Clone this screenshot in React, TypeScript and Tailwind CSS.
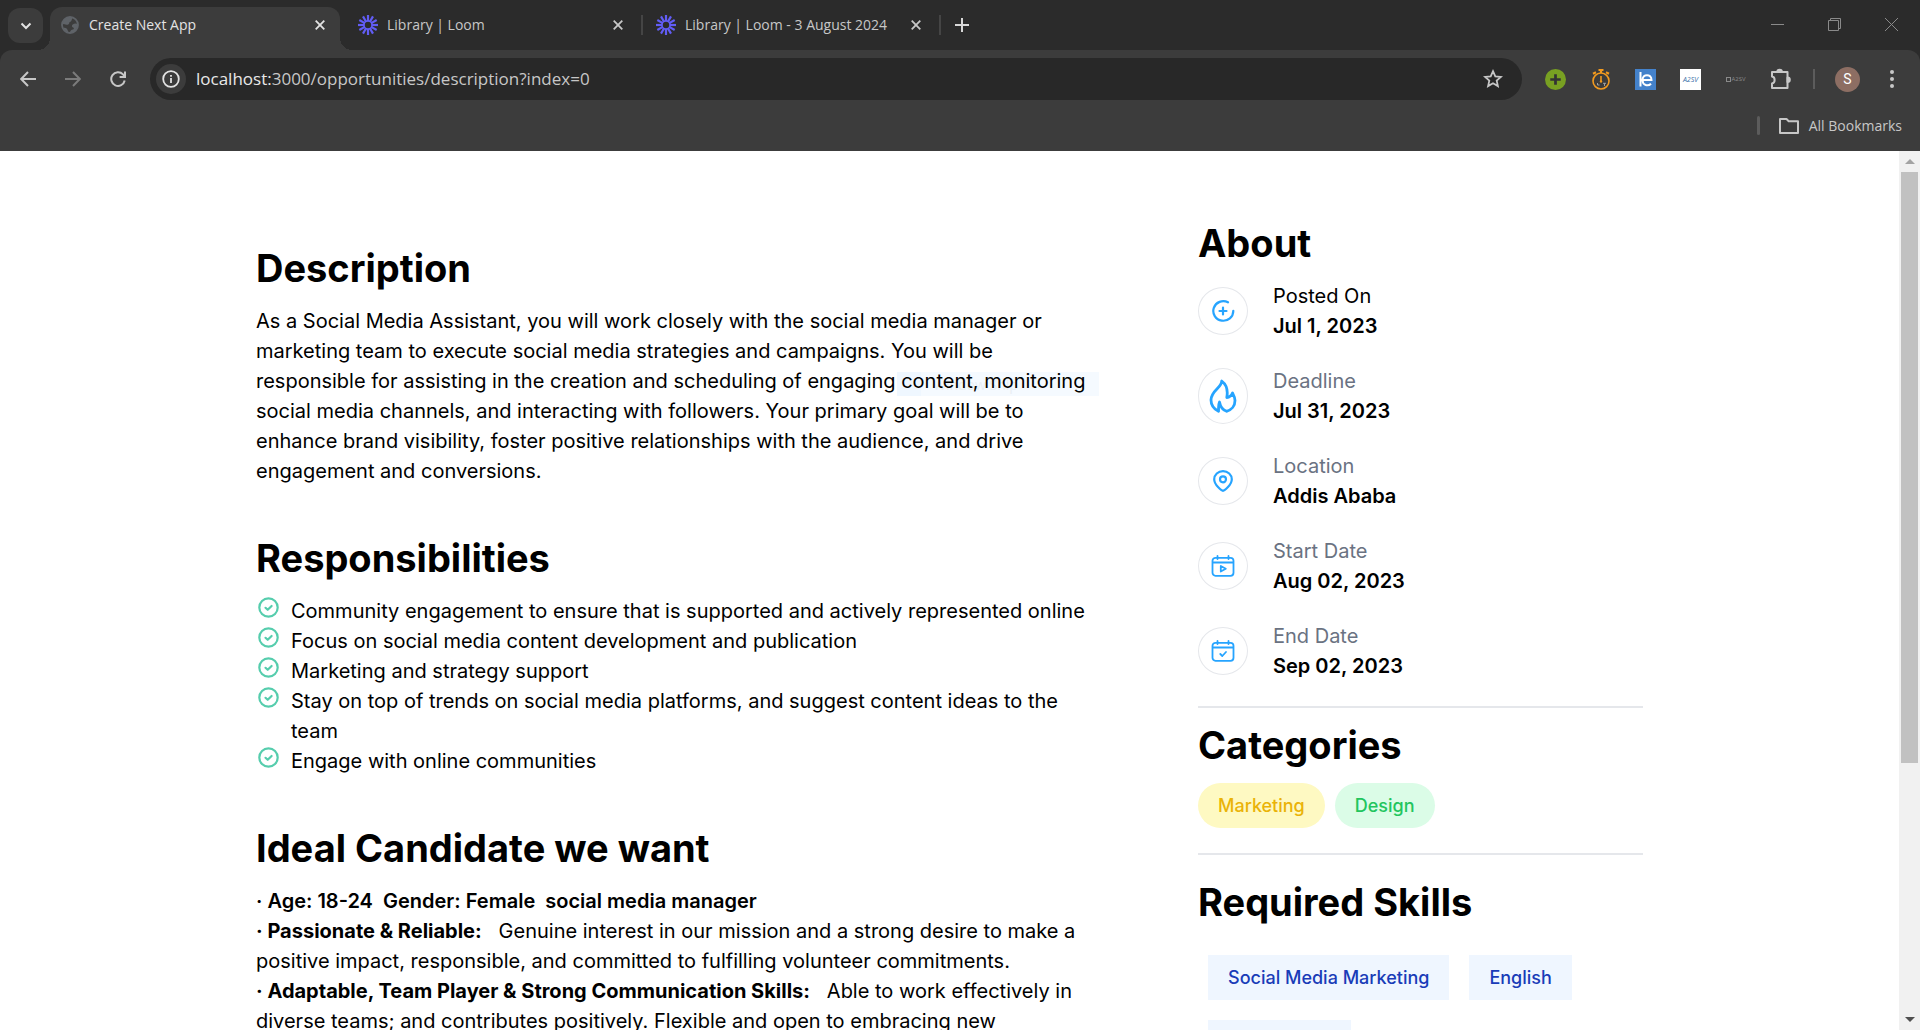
import type { ReactNode } from "react";

const LoomIcon = () => (
  <svg viewBox="0 0 20 20" className="size-5 shrink-0" stroke="#625df5" strokeWidth="2.2" aria-hidden="true">
    {[0, 30, 60, 90, 120, 150, 180, 210, 240, 270, 300, 330].map((a) => (
      <path key={a} d="M10 0v6.2" transform={`rotate(${a} 10 10)`} />
    ))}
    <circle cx="10" cy="10" r="4" fill="none" strokeWidth="1.6" />
  </svg>
);

const GlobeIcon = () => (
  <svg viewBox="0 0 20 20" className="size-5 shrink-0" aria-hidden="true">
    <circle cx="10" cy="10" r="8" fill="none" stroke="#5f6368" strokeWidth="1.8" />
    <path d="M9 2.200C6 2.600 3 5 2 9c1.500-.3 3 .6 4.500.8 1.500.2 2.800-.8 2.900-2.400.1-1.100 1.800-.5 2.100-2 .3-1.200 1-1.600.9-2.400zM17.500 9c-1.600-1-3.500-.6-4.800.6-1.200 1.100-1 2.500.4 2.900 1.300.3.900 1.800-.3 2.100-1.600.4-2.600 1-2.800 3 4.500.4 8-3.600 7.500-8.600zM3 12.500c1 3 3.400 4.700 5.200 5 .3-1.600-.7-2-1-3.200-.3-1.100-2.500-1.500-4.200-1.800z" fill="#5f6368" />
  </svg>
);

const CloseIcon = () => (
  <svg viewBox="0 0 10 10" className="size-[10px]" stroke="currentColor" strokeWidth="1.8" aria-hidden="true">
    <path d="M.7.700l8.600 8.600M9.300.700L.7 9.300" />
  </svg>
);

function Tab({ icon, title, active = false }: { icon: ReactNode; title: string; active?: boolean }) {
  return (
    <div
      className={
        active
          ? "relative mt-[7px] flex h-[43px] w-[290px] items-center gap-[9px] rounded-t-xl bg-[#3c3c3c] px-[10px] pb-[7px] text-[#e3e3e3]"
          : "mt-[7px] flex h-[43px] w-[290px] items-center gap-[9px] px-[10px] pb-[7px] text-[#c7c7c7]"
      }
    >
      {active && (
        <>
          <span className="absolute bottom-0 -left-3 size-3 bg-[radial-gradient(circle_at_0_0,transparent_12px,#3c3c3c_12px)]" />
          <span className="absolute -right-3 bottom-0 size-3 bg-[radial-gradient(circle_at_100%_0,transparent_12px,#3c3c3c_12px)]" />
        </>
      )}
      {icon}
      <span className="flex-1 truncate text-sm">{title}</span>
      <button aria-label={`Close ${title}`} className="flex size-5 items-center justify-center">
        <CloseIcon />
      </button>
    </div>
  );
}

const iconButton = "flex size-[35px] items-center justify-center";

function Browser() {
  return (
    <header className="shrink-0 bg-[#2b2b2b] font-['Open_Sans',sans-serif]">
      <div className="flex h-[50px] items-start pl-2">
        <button aria-label="Search tabs" className="mt-2 mr-[7px] flex size-[35px] items-center justify-center rounded-xl bg-[#3c3c3c] text-[#e3e3e3]">
          <svg viewBox="0 0 12 8" className="w-3" fill="none" stroke="currentColor" strokeWidth="2" aria-hidden="true">
            <path d="M1.500 1.500L6 6l4.500-4.500" />
          </svg>
        </button>
        <Tab active icon={<GlobeIcon />} title="Create Next App" />
        <div className="w-2" />
        <Tab icon={<LoomIcon />} title="Library | Loom" />
        <span className="mx-[3px] mt-[15px] h-5 w-[2px] bg-[#454545]" />
        <Tab icon={<LoomIcon />} title="Library | Loom - 3 August 2024" />
        <span className="mx-[3px] mt-[15px] h-5 w-[2px] bg-[#454545]" />
        <button aria-label="New tab" className="mt-[7px] flex size-[35px] items-center justify-center text-[#d8d8d8]">
          <svg viewBox="0 0 14 14" className="size-[14px]" stroke="currentColor" strokeWidth="2" aria-hidden="true">
            <path d="M7 0v14M0 7h14" />
          </svg>
        </button>
        <div className="ml-auto flex text-[#8a8a8a]">
          <button aria-label="Minimize" className="flex h-12 w-[57px] items-center justify-center">
            <svg viewBox="0 0 13 13" className="size-[13px]" stroke="currentColor" aria-hidden="true"><path d="M0 6.500h13" /></svg>
          </button>
          <button aria-label="Restore" className="flex h-12 w-[57px] items-center justify-center">
            <svg viewBox="0 0 13 13" className="size-[13px]" fill="none" stroke="currentColor" aria-hidden="true">
              <path d="M.5 2.500h10v10h-10zM2.500 2.500v-2h10v10h-2" />
            </svg>
          </button>
          <button aria-label="Close window" className="flex h-12 w-[57px] items-center justify-center">
            <svg viewBox="0 0 13 13" className="size-[13px]" stroke="currentColor" aria-hidden="true"><path d="M0 0l13 13M13 0L0 13" /></svg>
          </button>
        </div>
      </div>

      <div className="rounded-t-xl bg-[#3c3c3c] pb-2">
        <div className="flex h-[58px] items-center pr-[18px] pl-[10px] text-[#c7c7c7]">
          <div className="flex gap-[10px]">
            <button aria-label="Back" className={iconButton}>
              <svg viewBox="0 0 16 16" className="size-4" fill="none" stroke="currentColor" strokeWidth="2" aria-hidden="true"><path d="M16 8H1.500M8 1L1.200 8 8 15" /></svg>
            </button>
            <button aria-label="Forward" className="flex size-[35px] items-center justify-center text-[#7b7b7b]">
              <svg viewBox="0 0 16 16" className="size-4" fill="none" stroke="currentColor" strokeWidth="2" aria-hidden="true"><path d="M0 8h14.500M8 1l6.800 7L8 15" /></svg>
            </button>
            <button aria-label="Reload" className={iconButton}>
              <svg viewBox="0 0 16 16" className="size-4" fill="none" stroke="currentColor" strokeWidth="2" aria-hidden="true">
                <path d="M14.700 9.500A6.800 6.800 0 1 1 13 3.400L14.800 5.500M15 .500v5.400H9.600" />
              </svg>
            </button>
          </div>
          <div className="ml-[15px] flex h-[42px] flex-1 items-center rounded-full bg-[#282828] pr-3 pl-[6px]">
            <button aria-label="View site information" className="flex size-[30px] items-center justify-center rounded-full bg-[#3c3c3c] text-[#e3e3e3]">
              <svg viewBox="0 0 18 18" className="size-[18px]" fill="none" stroke="currentColor" strokeWidth="1.800" aria-hidden="true">
                <circle cx="9" cy="9" r="7.800" />
                <path d="M9 8v5M9 5v1.700" />
              </svg>
            </button>
            <div className="ml-[10px] flex-1 truncate text-[17px] leading-6" aria-label="Address">
              <span className="text-[#e8e8e8]">localhost:</span>
              <span>3000/opportunities/description?index=0</span>
            </div>
            <button aria-label="Bookmark this tab" className={iconButton}>
              <svg viewBox="0 0 20 20" className="size-5" fill="none" stroke="currentColor" strokeWidth="1.800" aria-hidden="true">
                <path d="M10 2.200l2.300 5.100 5.600.6-4.200 3.700 1.200 5.500L10 14.300l-4.900 2.800 1.200-5.500L2.100 7.900l5.600-.6z" />
              </svg>
            </button>
          </div>

          <div className="ml-4 flex gap-[10px]">
            <button aria-label="Add" className={iconButton}>
              <svg viewBox="0 0 20 20" className="size-[21px]" aria-hidden="true">
                <circle cx="10" cy="10" r="10" fill="#78a022" />
                <path d="M10 5v10M5 10h10" stroke="#333" strokeWidth="2.600" />
              </svg>
            </button>
            <button aria-label="Timer" className={iconButton}>
              <svg viewBox="0 0 20 21" className="h-[21px] w-5" fill="none" stroke="#f29a1f" strokeWidth="1.600" aria-hidden="true">
                <circle cx="10" cy="12" r="8" />
                <path d="M7.500 1h5M10 1v3M2 4.800l3-1.500M18 4.800l-3-1.500" strokeWidth="2.200" />
                <path d="M10 7v5.500" />
                <path d="M6.500 14v2h2M12 14.300h3M13.500 14.300V17" stroke="#aaa" strokeWidth=".9" />
                <circle cx="10" cy="12.500" r="1.200" fill="#f29a1f" stroke="none" />
              </svg>
            </button>
            <button aria-label="Reader" className={iconButton}>
              <svg viewBox="0 0 21 21" className="size-[21px]" fill="none" stroke="#fff" strokeWidth="2" aria-hidden="true">
                <path d="M0 0h21v21H0z" fill="#4482cb" stroke="none" />
                <path d="M5.500 3v14.500M6 11h10.500c0-6.500-9-6.500-9 0 0 5.500 5.600 6.700 8.500 3.700" />
              </svg>
            </button>
            <button aria-label="A2SV portal" className={iconButton}>
              <span className="flex size-[21px] items-center justify-center bg-white text-[7px] leading-none text-[#3a6fa8] italic">A2SV</span>
            </button>
            <button aria-label="A2SV hub" className={iconButton}>
              <span className="flex w-5 items-center gap-[1px] text-[6px] leading-none text-[#8a8a8a]">
                <span className="size-[5px] shrink-0 border border-[#8a8a8a]" />
                A2SV
              </span>
            </button>
            <button aria-label="Extensions" className={iconButton}>
              <svg viewBox="0 0 22 22" className="size-[22px]" fill="none" stroke="currentColor" strokeWidth="2" strokeLinejoin="round" aria-hidden="true">
                <path d="M2 4h15.500v16H2v-4.500c3.500-.5 3.500-6.500 0-7z" />
                <path d="M7.300 4a2.300 2.300 0 0 1 4.600 0zM17.500 9.500a2.300 2.300 0 0 1 0 4.600z" fill="currentColor" />
              </svg>
            </button>
          </div>
          <span className="mr-5 ml-[15px] h-5 w-[2px] bg-[#5c5c5c]" />
          <button aria-label="Profile" className="mr-[22px] flex size-[25px] items-center justify-center rounded-full bg-[#8d6e63] font-[Roboto,sans-serif] text-sm text-white">S</button>
          <button aria-label="Menu" className="flex h-[35px] w-5 items-center justify-center">
            <svg viewBox="0 0 4 18" className="h-[18px] w-1" fill="currentColor" aria-hidden="true">
              <circle cx="2" cy="2" r="2" /><circle cx="2" cy="9" r="2" /><circle cx="2" cy="16" r="2" />
            </svg>
          </button>
        </div>
        <div className="flex h-[35px] items-center justify-end pr-[18px] text-[#c7c7c7]">
          <span className="mr-[19px] h-[19px] w-[3px] rounded-full bg-[#5c5c5c]" />
          <button className="flex items-center gap-[10px] text-sm">
            <svg viewBox="0 0 20 16" className="h-4 w-5" fill="none" stroke="currentColor" strokeWidth="2" strokeLinejoin="round" aria-hidden="true">
              <path d="M1 1h6.500l2.200 2.200H19V15H1z" />
            </svg>
            All Bookmarks
          </button>
        </div>
      </div>
    </header>
  );
}

const responsibilities = [
  "Community engagement to ensure that is supported and actively represented online",
  "Focus on social media content development and publication",
  "Marketing and strategy support",
  "Stay on top of trends on social media platforms, and suggest content ideas to the team",
  "Engage with online communities",
];

const Calendar = ({ children }: { children: ReactNode }) => (
  <svg viewBox="0 0 24 22" className="h-[22px] w-6" fill="none" stroke="#26a4ff" strokeWidth="1.800" strokeLinecap="round" strokeLinejoin="round" aria-hidden="true">
    <rect x="1.500" y="2.800" width="21" height="18" rx="3" />
    <path d="M2 7.500h20M6.500 1v3M17.500 1v3" />
    {children}
  </svg>
);

const about = [
  {
    label: "Posted On",
    value: "Jul 1, 2023",
    icon: (
      <svg viewBox="0 0 24 22" className="h-[22px] w-6" fill="none" stroke="#26a4ff" strokeWidth="2.200" strokeLinecap="round" aria-hidden="true">
        <path d="M17 2.300a10 9.800 0 1 0 5.300 8.500M12 7.500v7M8.500 11h7" />
      </svg>
    ),
  },
  {
    label: "Deadline",
    value: "Jul 31, 2023",
    icon: (
      <svg viewBox="0 0 28 34" className="h-[34px] w-7" fill="none" stroke="#26a4ff" strokeWidth="2.800" strokeLinecap="round" strokeLinejoin="round" aria-hidden="true">
        <path d="M12.700 2C13 8.500 2 11.500 2 21c0 5 3 9 7.500 11.300.3-3-.5-6 1-9.300.8 4.500 3.500 8 7 9.300C22.500 31 26 27 26 21.500c0-3-1.200-5-2.500-7.500-1 2.500-3 4.300-5.700 4.500C19 12 18 6 12.700 2z" />
      </svg>
    ),
  },
  {
    label: "Location",
    value: "Addis Ababa",
    icon: (
      <svg viewBox="0 0 20 22" className="h-[22px] w-5" fill="none" stroke="#26a4ff" strokeWidth="2.200" strokeLinejoin="round" aria-hidden="true">
        <path d="M10 20.800c-1.500 0-8.800-6-8.800-11.500a8.800 8.200 0 0 1 17.600 0c0 5.500-7.300 11.500-8.800 11.500z" />
        <circle cx="10" cy="9.300" r="3" />
      </svg>
    ),
  },
  { label: "Start Date", value: "Aug 02, 2023", icon: <Calendar><path d="M9.800 11v5.500l5-2.700z" /></Calendar> },
  { label: "End Date", value: "Sep 02, 2023", icon: <Calendar><path d="M9.300 14l2 2 3.700-4" /></Calendar> },
];

const heading = "mb-[15px] text-[38px] leading-[45px] font-bold";

function Opportunity() {
  return (
    <main className="flex flex-1 items-start gap-[104px] px-64 font-[Inter,sans-serif] text-xl leading-[30px] text-black">
      <div className="flex min-w-0 flex-1 flex-col gap-[50px] pt-[95px]">
        <section>
          <h1 className={heading}>Description</h1>
          <div className="relative">
            <div className="absolute top-[66px] right-[-5px] flex h-6 w-[202px] bg-[#f5faff] text-sm leading-[26px] text-[#e9eef3]" aria-hidden="true">
              <span className="w-6 bg-[#eff7ff]" />
              <span className="ml-3 font-['Open_Sans',sans-serif]">Window Snip</span>
            </div>
            <p className="relative">
              As a Social Media Assistant, you will work closely with the social media manager or marketing team to
              execute social media strategies and campaigns. You will be responsible for assisting in the creation and
              scheduling of engaging content, monitoring social media channels, and interacting with followers. Your
              primary goal will be to enhance brand visibility, foster positive relationships with the audience, and
              drive engagement and conversions.
            </p>
          </div>
        </section>

        <section>
          <h1 className={heading}>Responsibilities</h1>
          <ul>
            {responsibilities.map((text) => (
              <li key={text} className="flex items-start gap-[11px]">
                <svg viewBox="0 0 24 24" className="size-6 shrink-0" fill="none" stroke="#56cdad" strokeWidth="2.200" strokeLinecap="round" strokeLinejoin="round" aria-hidden="true">
                  <circle cx="12.500" cy="11.500" r="9.200" />
                  <path d="M9.500 11.800l2.200 2 3.900-3.800" />
                </svg>
                <span>{text}</span>
              </li>
            ))}
          </ul>
        </section>

        <section>
          <h1 className={heading}>Ideal Candidate we want</h1>
          <p className="font-semibold">·&nbsp;Age: 18-24&nbsp; Gender: Female&nbsp; social media manager</p>
          <p>
            <b className="font-bold">·&nbsp;Passionate &amp; Reliable:</b>&nbsp;&nbsp; Genuine interest in our mission
            and a strong desire to make a positive impact, responsible, and committed to fulfilling volunteer
            commitments.
          </p>
          <p>
            <b className="font-bold">·&nbsp;Adaptable, Team Player &amp; Strong Communication Skills:</b>&nbsp;&nbsp;
            Able to work effectively in diverse teams; and contributes positively. Flexible and open to embracing new
          </p>
        </section>
      </div>

      <aside className="w-[445px] pt-[70px]">
        <h1 className={heading}>About</h1>
        <dl className="flex flex-col gap-[25px]">
          {about.map((item, i) => (
            <div key={item.label} className="flex items-center gap-[25px]">
              <div
                className={
                  item.label === "Deadline"
                    ? "flex w-[50px] justify-center rounded-[50%] border border-gray-200 py-[10px]"
                    : "flex w-[50px] justify-center rounded-[50%] border border-gray-200 py-3"
                }
              >
                {item.icon}
              </div>
              <div>
                <dt className={i === 0 ? "" : "text-gray-500"}>{item.label}</dt>
                <dd className="font-semibold">{item.value}</dd>
              </div>
            </div>
          ))}
        </dl>
        <hr className="mt-[25px] mb-[15px] border-t-2 border-gray-200" />
        <h1 className={heading}>Categories</h1>
        <div className="flex gap-[10px] text-lg leading-[25px] font-medium">
          <span className="rounded-full bg-yellow-100 px-5 py-[10px] text-[#eab308]">Marketing</span>
          <span className="rounded-full bg-green-100 px-5 py-[10px] text-[#22c55e]">Design</span>
        </div>
        <hr className="my-[25px] border-t-2 border-gray-200" />
        <h1 className={heading}>Required Skills</h1>
        <div className="flex flex-wrap gap-5 px-[10px] pt-[15px] text-lg leading-[25px] font-medium text-blue-800">
          <span className="bg-blue-50 px-5 py-[10px]">Social Media Marketing</span>
          <span className="bg-blue-50 px-5 py-[10px]">English</span>
          <span className="h-[45px] w-[143px] bg-blue-50" />
        </div>
      </aside>
    </main>
  );
}

export default function App() {
  return (
    <div className="flex h-screen flex-col overflow-hidden bg-white">
      <Browser />
      <div className="flex min-h-0 flex-1">
        <div className="min-w-0 flex-1 overflow-hidden">
          <Opportunity />
        </div>
        <div className="flex w-[21px] shrink-0 flex-col items-center bg-[#f1f1f1]" aria-hidden="true">
          <span className="flex h-[21px] items-center">
            <svg viewBox="0 0 10 5" className="h-[5px] w-[10px]" fill="#a3a3a3"><path d="M0 5l5-5 5 5z" /></svg>
          </span>
          <span className="min-h-0 w-[17px] basis-[591px] bg-[#c1c1c1]" />
          <span className="mt-auto flex h-[21px] items-center">
            <svg viewBox="0 0 10 5" className="h-[5px] w-[10px]" fill="#505050"><path d="M0 0l5 5 5-5z" /></svg>
          </span>
        </div>
      </div>
    </div>
  );
}
